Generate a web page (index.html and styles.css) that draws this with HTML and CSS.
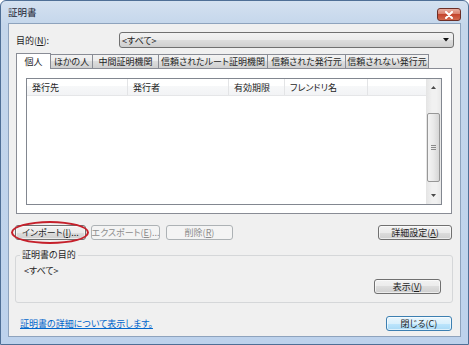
FILE: index.html
```html
<!DOCTYPE html>
<html lang="ja">
<head>
  <meta charset="UTF-8" />
  <title>証明書</title>
  <link rel="stylesheet" href="styles.css">
</head>
<body>
  <div class="window">
    <div class="titlebar">
      <span class="title">証明書</span>
      <span class="close-box">
        <svg width="10" height="8" viewBox="0 0 10 8">
          <path d="M2 1 L8 7 M8 1 L2 7" stroke="#fff" stroke-width="2" stroke-linecap="round"/>
        </svg>
      </span>
    </div>

    <div class="client">
      <div class="purpose-row">
        <span class="purpose-label">目的(<u>N</u>):</span>
        <div class="combo">
          <span>&lt;すべて&gt;</span>
          <svg width="6" height="4" viewBox="0 0 6 4"><path d="M0 0 H6 L3 3.5 Z" fill="#111"/></svg>
        </div>
      </div>

      <div class="tabs">
        <div class="tab active tab-1">個人</div>
        <div class="tab tab-2">ほかの人</div>
        <div class="tab tab-3">中間証明機関</div>
        <div class="tab tab-4">信頼されたルート証明機関</div>
        <div class="tab tab-5">信頼された発行元</div>
        <div class="tab tab-6">信頼されない発行元</div>
      </div>

      <div class="panel">
        <div class="listview">
          <div class="list-main">
            <div class="list-header">
              <div class="col col-1">発行先</div>
              <div class="col col-2">発行者</div>
              <div class="col col-3">有効期限</div>
              <div class="col col-4">フレンドリ名</div>
            </div>
          </div>
          <div class="scrollbar">
            <div class="sb-arrow">
              <svg width="5" height="3" viewBox="0 0 5 3"><path d="M0 3 H5 L2.5 0 Z" fill="#4a4a4a"/></svg>
            </div>
            <div class="sb-thumb">
              <svg width="5" height="5" viewBox="0 0 5 5"><path d="M0 0.5 H5 M0 2.5 H5 M0 4.5 H5" stroke="#8a8a8a" stroke-width="1"/></svg>
            </div>
            <div class="sb-rest"></div>
            <div class="sb-arrow">
              <svg width="5" height="3" viewBox="0 0 5 3"><path d="M0 0 H5 L2.5 3 Z" fill="#4a4a4a"/></svg>
            </div>
          </div>
        </div>
      </div>

      <div class="button-row">
        <button class="btn btn-import">インポート(<u>I</u>)...</button>
        <button class="btn btn-export" disabled>エクスポート(<u>E</u>)...</button>
        <button class="btn btn-delete" disabled>削除(<u>R</u>)</button>
        <button class="btn btn-advanced">詳細設定(<u>A</u>)</button>
        <span class="highlight"></span>
      </div>

      <fieldset class="group">
        <legend>証明書の目的</legend>
        <div class="group-value">&lt;すべて&gt;</div>
        <div class="group-actions">
          <button class="btn btn-view">表示(<u>V</u>)</button>
        </div>
      </fieldset>

      <div class="footer">
        <a class="details-link" href="#">証明書の詳細について表示します。</a>
        <button class="btn btn-default btn-close">閉じる(C)</button>
      </div>
    </div>
  </div>
</body>
</html>
```

FILE: styles.css
```css
body {
  margin: 0;
  font-family: "Noto Sans CJK JP", "Noto Sans", sans-serif;
  font-size: 9px;
  font-feature-settings: "palt";
  color: #1e1e1e;
}
.window {
  width: 469px;
  height: 345px;
  box-sizing: border-box;
  border: 1px solid #4f6f96;
  border-radius: 6px 6px 0 0;
  background: linear-gradient(to bottom, #d4e1f0 0, #c4d6eb 24px, #bdd2ec 100%);
  display: flex;
  flex-direction: column;
}
.titlebar {
  height: 22px;
  display: flex;
  justify-content: space-between;
  padding: 0 7px;
}
.title {
  line-height: 22px;
  font-size: 9.5px;
  color: #1a2433;
}
.close-box {
  width: 24px;
  height: 13px;
  margin-top: 7px;
  box-sizing: border-box;
  border: 1px solid #6c2f27;
  border-radius: 3px;
  background: linear-gradient(to bottom, #eab0a4 0, #d9806d 45%, #c4452e 50%, #d2694f 100%);
  display: flex;
  align-items: center;
  justify-content: center;
}
.client {
  flex: 1;
  margin: 0 7px 7px;
  border: 1px solid #8ea3bd;
  background: #f0f0f0;
  padding: 8px 6px 0 7px;
  display: flex;
  flex-direction: column;
}

/* purpose combo */
.purpose-row {
  display: flex;
  align-items: center;
  height: 16px;
}
.purpose-label {
  width: 103px;
}
.combo {
  flex: 1;
  height: 16px;
  box-sizing: border-box;
  border: 1px solid #707070;
  border-radius: 3px;
  background: linear-gradient(to bottom, #f2f2f2 0, #ebebeb 50%, #dddddd 50%, #cfcfcf 100%);
  display: flex;
  align-items: center;
  justify-content: space-between;
  padding: 0 4px 0 2px;
}

/* tabs */
.tabs {
  display: flex;
  align-items: flex-end;
  height: 15px;
  margin-top: 5px;
  position: relative;
  z-index: 1;
}
.tab {
  height: 14px;
  box-sizing: border-box;
  border: 1px solid #898c95;
  border-bottom: none;
  background: linear-gradient(to bottom, #f3f3f3 0, #ebebeb 50%, #dddddd 50%, #cfcfcf 100%);
  display: flex;
  align-items: center;
  justify-content: center;
  margin-left: -1px;
  white-space: nowrap;
}
.tab.active {
  height: 16px;
  margin-left: 0;
  margin-bottom: -1px;
  background: #fff;
  position: relative;
  z-index: 2;
}
.tab-1 { width: 35px; }
.tab-2 { width: 43px; }
.tab-3 { width: 67px; }
.tab-4 { width: 110px; }
.tab-5 { width: 79px; }
.tab-6 { width: 84px; }

.panel {
  height: 146px;
  margin-right: 2px;
  box-sizing: border-box;
  border: 1px solid #898c95;
  background: #fff;
  padding: 9px 9px 8px 9px;
}
.listview {
  height: 127px;
  box-sizing: border-box;
  border: 1px solid #828790;
  display: flex;
}
.list-main {
  flex: 1;
}
.list-header {
  display: flex;
  height: 17px;
  box-sizing: border-box;
  border-bottom: 1px solid #e5e6e8;
  background: linear-gradient(to bottom, #ffffff 0, #ffffff 45%, #f7f8f9 45%, #f2f3f5 100%);
}
.col {
  box-sizing: border-box;
  border-right: 1px solid #e3e4e6;
  padding-left: 5px;
  display: flex;
  align-items: center;
}
.col-1 { width: 101px; }
.col-2 { width: 101px; }
.col-3 { width: 56px; }
.col-4 { width: 83px; }

.scrollbar {
  width: 15px;
  display: flex;
  flex-direction: column;
  background: linear-gradient(to right, #e4e4e4 0, #f1f1f1 40%, #f1f1f1 70%, #e8e8e8 100%);
}
.sb-arrow {
  height: 17px;
  display: flex;
  align-items: center;
  justify-content: center;
}
.sb-thumb {
  height: 69px;
  margin: 17px 1px 0;
  box-sizing: border-box;
  border: 1px solid #979797;
  border-radius: 2px;
  background: linear-gradient(to right, #f4f4f4 0, #e9e9e9 50%, #d6d6d6 100%);
  display: flex;
  align-items: center;
  justify-content: center;
}
.sb-rest {
  flex: 1;
}

/* buttons */
.button-row {
  display: flex;
  align-items: center;
  height: 15px;
  margin-top: 11px;
  position: relative;
}
.btn {
  height: 15px;
  box-sizing: border-box;
  padding: 0;
  font: inherit;
  color: #1e1e1e;
  border: 1px solid #707070;
  border-radius: 3px;
  background: linear-gradient(to bottom, #f2f2f2 0, #ebebeb 50%, #dddddd 50%, #cfcfcf 100%);
  box-shadow: inset 0 0 0 1px rgba(255, 255, 255, 0.6);
  display: flex;
  align-items: center;
  justify-content: center;
  white-space: nowrap;
}
.btn:disabled {
  color: #8d8d8d;
  border-color: #adb2b5;
  background: #f4f4f4;
  box-shadow: none;
}
.btn-default {
  border-color: #3c7fb1;
  background: linear-gradient(to bottom, #eaf6fd 0, #d9f0fc 50%, #bee6fd 50%, #a7d9f5 100%);
}
.btn-import { width: 71px; margin-left: -1px; }
.btn-export { width: 69px; margin-left: 5px; }
.btn-delete { width: 67px; margin-left: 6px; }
.btn-advanced { width: 74px; margin-left: auto; margin-right: 2px; }
.btn-view { width: 67px; }
.btn-close { width: 66px; margin-right: 2px; }

.highlight {
  position: absolute;
  left: -5px;
  top: -4px;
  width: 78px;
  height: 23px;
  box-sizing: border-box;
  border: 2px solid #c5202b;
  border-radius: 50%;
  pointer-events: none;
}

/* purpose group */
.group {
  margin: 9px 1px 0 -1px;
  padding: 0 11px 8px 8px;
  border: 1px solid #d5d7d9;
  border-radius: 3px;
  min-width: 0;
}
.group legend {
  padding: 0 2px;
  margin-left: -4px;
  line-height: 12px;
}
.group-value {
  line-height: 12px;
  margin-top: 4px;
}
.group-actions {
  display: flex;
  justify-content: flex-end;
  margin-top: 2px;
}

.footer {
  display: flex;
  align-items: center;
  justify-content: space-between;
  height: 15px;
  margin-top: 13px;
}
.details-link {
  margin-left: 4px;
  color: #0066cc;
  text-decoration: underline;
}
```
